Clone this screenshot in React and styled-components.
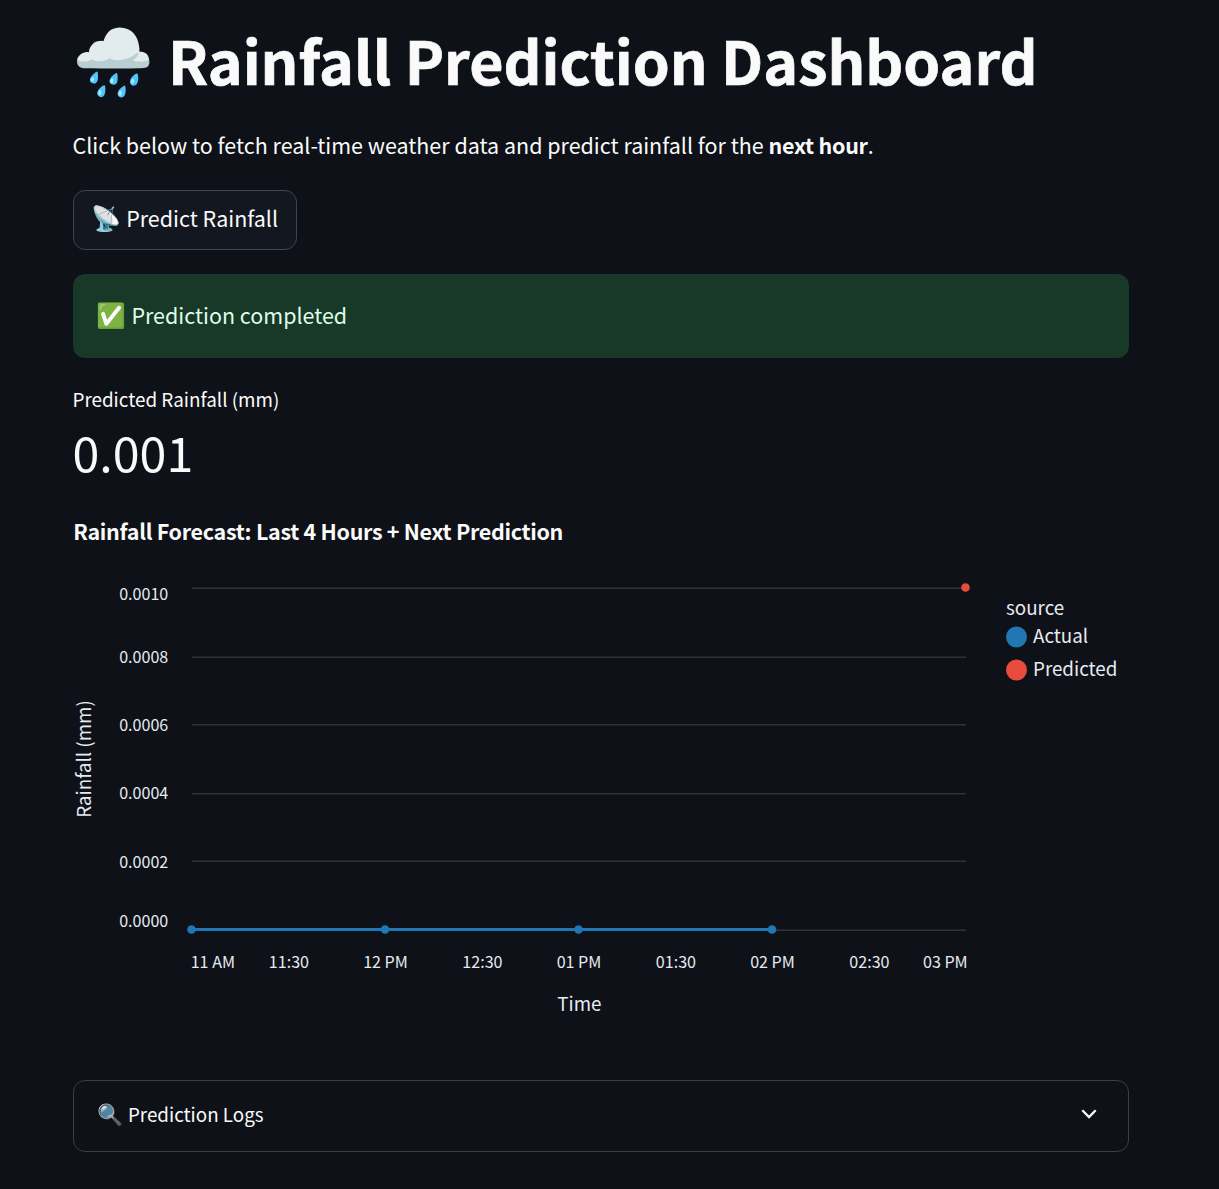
import React from 'react';
import styled, { createGlobalStyle } from 'styled-components';

const Global = createGlobalStyle`
  * { box-sizing: border-box; }
  body {
    margin: 0;
    background: #0e1117;
    color: #fafafa;
    font-family: "Noto Sans CJK SC", "Noto Sans", sans-serif;
    font-size: 21.48px;
  }
`;

const Page = styled.main`
  display: flex;
  flex-direction: column;
  align-items: flex-start;
  height: 1189px;
  padding: 20px 90px 0 73px;
`;

const Title = styled.h1`
  display: flex;
  align-items: baseline;
  gap: 13.7px;
  margin: 0 0 0 -0.8px;
  height: 79px;
  line-height: 79px;
  font-size: 59.1px;
  font-weight: 700;
  white-space: nowrap;
`;

const TitleText = styled.span`
  -webkit-text-stroke: 0.7px #fafafa;
`;

const Emoji = styled.span`
  font-size: 1.117em;
  line-height: 1;
`;

const Label = styled.span`
  display: flex;
  align-items: baseline;
  gap: ${(p) => p.$gap}px;
  padding-bottom: ${(p) => p.$lift}px;
  line-height: 38px;
  white-space: nowrap;
`;

const Intro = styled.p`
  margin: 27px 0 0 -0.5px;
  height: 38px;
  line-height: 38px;
  white-space: nowrap;
`;

const Strong = styled.b`
  letter-spacing: -0.25px;
`;

const Button = styled.button`
  display: flex;
  align-items: center;
  margin-top: 26px;
  width: 224px;
  height: 60px;
  padding: 0 0 0 17.2px;
  border: 1px solid #41444c;
  border-radius: 12px;
  background: #131720;
  color: #fafafa;
  font: inherit;
`;

const Alert = styled.div`
  display: flex;
  align-items: center;
  align-self: stretch;
  margin-top: 24px;
  height: 84px;
  padding: 0 23px;
  border-radius: 12px;
  background: #183828;
  color: #dffde9;
`;

const MetricLabel = styled.div`
  margin: 25px 0 0 -0.5px;
  height: 32px;
  line-height: 32px;
  font-size: 18.83px;
`;

const MetricValue = styled.div`
  margin: 2px 0 0 -0.5px;
  height: 68px;
  line-height: 68px;
  font-size: 48.35px;
`;

const Chart = styled.svg`
  display: block;
  flex: none;
  margin-top: 25px;
  width: 1056px;
  height: 540px;
  overflow: visible;
`;

const AxisText = styled.text`
  fill: #e6eaf1;
  font-size: ${(p) => (p.$large ? 18.8 : 16.1)}px;
  text-anchor: ${(p) => p.$anchor || 'middle'};
`;

const ChartTitle = styled.text`
  fill: #fafafa;
  font-size: 21.48px;
  font-weight: 700;
  letter-spacing: -0.29px;
`;

const Expander = styled.section`
  display: flex;
  align-items: center;
  justify-content: space-between;
  align-self: stretch;
  margin-top: 30px;
  height: 72px;
  padding: 0 31px 0 22.8px;
  border: 1px solid #3b3e45;
  border-radius: 12px;
  font-size: 18.8px;
`;

const Chevron = styled.svg`
  margin-bottom: 4px;
`;

const yTicks = [
  ['0.0010', 588, 600],
  ['0.0008', 657, 663],
  ['0.0006', 724.5, 731],
  ['0.0004', 793.5, 799],
  ['0.0002', 861, 868],
  ['0.0000', 930, 927],
];

const xTicks = [
  ['11 AM', 190.7, 'start'],
  ['11:30', 288.9],
  ['12 PM', 385.5],
  ['12:30', 482.4],
  ['01 PM', 579],
  ['01:30', 675.9],
  ['02 PM', 772.5],
  ['02:30', 869.4],
  ['03 PM', 967.7, 'end'],
];

export default function App() {
  return (
    <>
      <Global />
      <Page>
        <Title><Emoji>🌧️</Emoji><TitleText>Rainfall Prediction Dashboard</TitleText></Title>
        <Intro>Click below to fetch real-time weather data and predict rainfall for the <Strong>next hour</Strong>.</Intro>
        <Button><Label $gap={5} $lift={5}><Emoji>📡</Emoji><span>Predict Rainfall</span></Label></Button>
        <Alert><Label $gap={5.4} $lift={2}><Emoji>✅</Emoji><span>Prediction completed</span></Label></Alert>
        <MetricLabel>Predicted Rainfall (mm)</MetricLabel>
        <MetricValue>0.001</MetricValue>
        <Chart viewBox="73 510 1056 540">
          <ChartTitle x="73.3" y="540">Rainfall Forecast: Last 4 Hours + Next Prediction</ChartTitle>
          {yTicks.map(([label, y, base]) => (
            <g key={label}>
              <path d={`M192 ${y + 0.25}H966`} stroke="#31333b" strokeWidth="1.5" />
              <AxisText x="168.3" y={base} $anchor="end">{label}</AxisText>
            </g>
          ))}
          {xTicks.map(([label, x, anchor]) => (
            <AxisText key={label} x={x} y="968" $anchor={anchor}>{label}</AxisText>
          ))}
          <AxisText $large x="579.4" y="1011">Time</AxisText>
          <AxisText $large transform="translate(90.7 759) rotate(-90)">Rainfall (mm)</AxisText>
          <path d="M192 929.5H772" stroke="#1f77b4" strokeWidth="3" />
          {[191.5, 385, 578.5, 772].map((x) => (
            <circle key={x} cx={x} cy="929.5" r="4.3" fill="#1f77b4" />
          ))}
          <circle cx="965.5" cy="587.5" r="4.3" fill="#e74c3c" />
          <AxisText $large $anchor="start" x="1006" y="615">source</AxisText>
          <circle cx="1016.5" cy="637" r="10.5" fill="#1f77b4" />
          <AxisText $large $anchor="start" x="1033" y="643">Actual</AxisText>
          <circle cx="1016.5" cy="670" r="10.5" fill="#e74c3c" />
          <AxisText $large $anchor="start" x="1033" y="676">Predicted</AxisText>
        </Chart>
        <Expander>
          <Label $gap={5.2} $lift={4}><Emoji>🔍</Emoji><span>Prediction Logs</span></Label>
          <Chevron width="16" height="10" viewBox="0 0 16 10" fill="none" stroke="#fafafa" strokeWidth="2.3">
            <path d="M1.3 1.3L8 8L14.7 1.3" />
          </Chevron>
        </Expander>
      </Page>
    </>
  );
}
